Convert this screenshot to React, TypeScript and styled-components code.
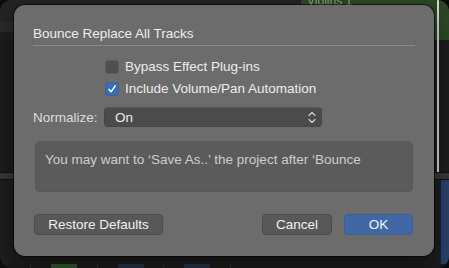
import React from 'react';
import styled, { createGlobalStyle } from 'styled-components';

const GlobalStyle = createGlobalStyle`
  html, body {
    margin: 0;
    padding: 0;
    background: #000;
  }
  body {
    font-family: "Liberation Sans", "Noto Sans", Arial, sans-serif;
    -webkit-font-smoothing: antialiased;
  }
`;

const Screen = styled.div`
  position: relative;
  width: 449px;
  height: 268px;
  overflow: hidden;
  background: #0c0c0c;
`;

// the DAW window that sits behind the sheet
const Window = styled.div`
  width: 449px;
  height: 268px;
  border-radius: 12px;
  overflow: hidden;
  background: #1f1f1f;
  display: grid;
  grid-template-rows: 40px 132px 8px 84px 1fr;
`;

const TopLane = styled.div`
  display: grid;
  grid-template-columns: 301px 136px 2px 1fr;
`;

const LaneDark = styled.div`
  background: linear-gradient(
    to bottom,
    #242424 0,
    #242424 22px,
    #2b2b2b 22px,
    #2b2b2b 32px,
    #1f1f1f 32px
  );
`;

const Region = styled.div<{ $color: string }>`
  background: ${(p) => p.$color};
  color: #8fa486;
  font-size: 12px;
  line-height: 12px;
  padding-left: 6px;
  margin-top: -5px;
  overflow: hidden;
`;

const WhiteLine = styled.div`
  background: #d8d8d8;
`;

const MidLane = styled.div`
  display: grid;
  grid-template-columns: 437px 2px 1fr;
  background: #1c1c1c;
`;

const Band = styled.div`
  background: #383838;
  border-top: 1px solid #111;
  border-bottom: 1px solid #111;
`;

const LowLane = styled.div`
  display: grid;
  grid-template-columns: 440px 1fr;
  background: #1e1e1e;
`;

const BlueClip = styled.div`
  background: #29416a;
  border-left: 1px solid #15223a;
`;

const Strip = styled.div`
  display: grid;
  grid-template-columns: 30px 67px 66px 67px 1fr;
  background: #1b1b1b;
`;

const StripCell = styled.div<{ $accent?: string }>`
  border-left: 1px solid #2c2c2c;
  display: flex;
  justify-content: center;
  align-items: flex-end;
  & > span {
    width: 26px;
    height: 8px;
    background: ${(p) => p.$accent || 'transparent'};
  }
`;

// the sheet
const Sheet = styled.div`
  position: absolute;
  left: 14px;
  top: 5px;
  width: 420px;
  height: 251px;
  box-sizing: border-box;
  padding: 21px 19px 21px 19px;
  background: #6c6c6c;
  border-radius: 11px;
  box-shadow: 0 0 0 1px rgba(0, 0, 0, 0.55), 0 8px 24px rgba(0, 0, 0, 0.5);
  display: flex;
  flex-direction: column;
  color: #ececec;
  font-size: 13.5px;
`;

const Title = styled.div`
  line-height: 16px;
  color: #ededed;
  padding-bottom: 3px;
  border-bottom: 1px solid #8a8a8a;
`;

const Options = styled.div`
  display: flex;
  flex-direction: column;
  padding: 10px 0 0 72px;
`;

const OptionRow = styled.label`
  display: flex;
  align-items: center;
  gap: 6px;
  height: 22px;
  line-height: 16px;
`;

const Box = styled.span<{ $checked?: boolean }>`
  width: 14px;
  height: 14px;
  box-sizing: border-box;
  border-radius: 3px;
  background: ${(p) => (p.$checked ? '#3e6cb3' : '#4f4f4f')};
  border: 1px solid ${(p) => (p.$checked ? '#3a62a2' : '#5d5d5d')};
  display: flex;
  align-items: center;
  justify-content: center;
`;

const FieldRow = styled.div`
  display: grid;
  grid-template-columns: 71px 218px;
  align-items: center;
  margin-top: 7px;
  height: 20px;
`;

const FieldLabel = styled.span`
  color: #dcdcdc;
`;

const Popup = styled.div`
  height: 20px;
  box-sizing: border-box;
  border-radius: 4px;
  background: #4b4b4b;
  border: 1px solid #474747;
  border-top-color: #555;
  display: flex;
  align-items: center;
  justify-content: space-between;
  padding: 0 5px 0 10px;
  color: #eee;
`;

const Note = styled.div`
  margin: 14px 2px 0 2px;
  height: 51px;
  box-sizing: border-box;
  border-radius: 5px;
  background: #5b5b5b;
  border: 1px solid #575757;
  padding: 10px 9px;
  line-height: 16px;
  color: #cdcdcd;
`;

const Footer = styled.div`
  display: flex;
  align-items: center;
  margin-top: 22px;
  padding: 0 2px 0 1px;
`;

const Spacer = styled.div`
  flex: 1;
`;

const Button = styled.button<{ $primary?: boolean; $w: number }>`
  width: ${(p) => p.$w}px;
  height: 21px;
  box-sizing: border-box;
  border-radius: 4px;
  font: inherit;
  color: #f2f2f2;
  padding: 0;
  background: ${(p) => (p.$primary ? '#4168a4' : '#585858')};
  border: 1px solid ${(p) => (p.$primary ? '#3a5e96' : '#4c4c4c')};
  & + & {
    margin-left: 12px;
  }
`;

const Check = () => (
  <svg width="10" height="10" viewBox="0 0 10 10">
    <path d="M2 5.4 L4.1 7.8 L8.2 1.8" fill="none" stroke="#fff" strokeWidth="1.5" strokeLinecap="round" strokeLinejoin="round" />
  </svg>
);

const Chevrons = () => (
  <svg width="8" height="13" viewBox="0 0 8 13">
    <path d="M1 4.5 L4 1.5 L7 4.5 M1 8.5 L4 11.5 L7 8.5" fill="none" stroke="#d6d6d6" strokeWidth="1.1" strokeLinecap="round" strokeLinejoin="round" />
  </svg>
);

export default function App() {
  return (
    <>
      <GlobalStyle />
      <Screen>
        <Window>
          <TopLane>
            <LaneDark />
            <Region $color="#2d4826">Violins 1</Region>
            <WhiteLine />
            <Region $color="#2d4826" />
          </TopLane>
          <MidLane>
            <div />
            <WhiteLine />
            <div />
          </MidLane>
          <Band />
          <LowLane>
            <div />
            <BlueClip />
          </LowLane>
          <Strip>
            <StripCell />
            <StripCell $accent="#2f5a2a"><span /></StripCell>
            <StripCell $accent="#22324c"><span /></StripCell>
            <StripCell $accent="#22324c"><span /></StripCell>
            <StripCell />
          </Strip>
        </Window>

        <Sheet>
          <Title>Bounce Replace All Tracks</Title>
          <Options>
            <OptionRow>
              <Box />
              Bypass Effect Plug-ins
            </OptionRow>
            <OptionRow>
              <Box $checked>
                <Check />
              </Box>
              Include Volume/Pan Automation
            </OptionRow>
          </Options>
          <FieldRow>
            <FieldLabel>Normalize:</FieldLabel>
            <Popup>
              <span>On</span>
              <Chevrons />
            </Popup>
          </FieldRow>
          <Note>You may want to ‘Save As..’ the project after ‘Bounce</Note>
          <Footer>
            <Button $w={129}>Restore Defaults</Button>
            <Spacer />
            <Button $w={70}>Cancel</Button>
            <Button $w={69} $primary>OK</Button>
          </Footer>
        </Sheet>
      </Screen>
    </>
  );
}
